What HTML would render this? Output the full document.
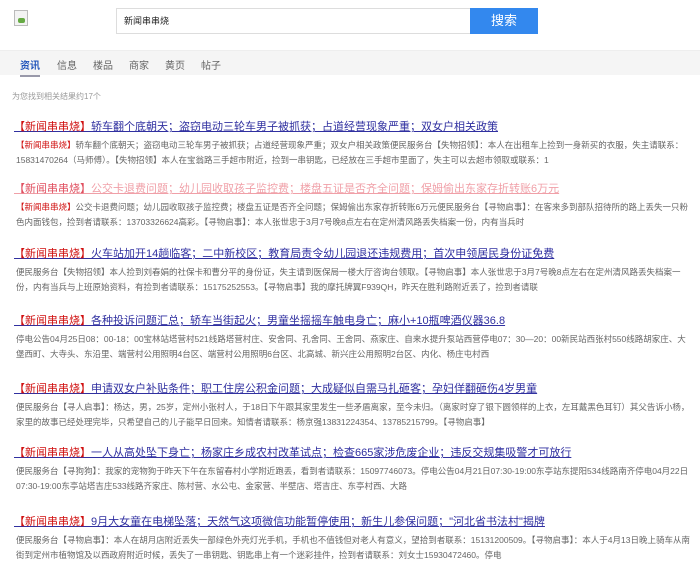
<!DOCTYPE html>
<html><head><meta charset="utf-8"><style>
*{margin:0;padding:0;box-sizing:border-box}
body{width:700px;height:560px;overflow:hidden;background:#fff;font-family:"Liberation Sans","Noto Sans CJK SC",sans-serif;position:relative}
.logo{position:absolute;left:14px;top:10px;width:14px;height:16px;border:1px solid #bbb;background:#f3f3f3}
.logo:after{content:"";position:absolute;left:3px;top:7px;width:7px;height:5px;background:#6a4;border-radius:2px}
.inp{position:absolute;left:116px;top:8px;width:354px;height:26px;border:1px solid #ddd;font-size:9px;line-height:24px;padding-left:7px;color:#222;border-right:none}
.btn{position:absolute;left:470px;top:8px;width:68px;height:26px;background:#3388ee;color:#fff;font-size:13px;text-align:center;line-height:26px}
.nav{position:absolute;left:0;top:50px;width:700px;height:25px;background:#f5f5f5;border-top:1px solid #eee}
.nav span{position:absolute;top:6px;font-size:10px;color:#666}
.nav .on{color:#2255bb;font-weight:bold}
.nav .ul{position:absolute;left:20px;top:24px;width:20px;height:2px;background:#99a}
.cnt{position:absolute;left:12px;top:91px;font-size:8px;color:#999}
.r{position:absolute;left:14px;width:680px}
.t{font-size:11px;color:#3030a0;text-decoration:underline;white-space:nowrap;line-height:14px}
.t b{color:#d01010;font-weight:normal}
.p{color:#f0a0a8}.p b{color:#e05060}
.d{font-size:8.5px;color:#666;line-height:14.5px;margin-top:4px;margin-left:2px}
.d b{color:#d01010;font-weight:normal}
</style></head><body>
<div class="logo"></div>
<div class="inp">新闻串串烧</div>
<div class="btn">搜索</div>
<div class="nav"><span class="on" style="left:20px">资讯</span><span style="left:57px">信息</span><span style="left:93px">楼品</span><span style="left:129px">商家</span><span style="left:165px">黄页</span><span style="left:201px">帖子</span><div class="ul"></div></div>
<div class="cnt">为您找到相关结果约17个</div>

<div class="r" style="top:120px"><div class="t"><b>【新闻串串烧】</b>轿车翻个底朝天；盗窃电动三轮车男子被抓获；占道经营现象严重；双女户相关政策</div>
<div class="d"><b>【新闻串串烧】</b>轿车翻个底朝天；盗窃电动三轮车男子被抓获；占道经营现象严重；双女户相关政策便民服务台【失物招领】：本人在出租车上捡到一身新买的衣服，失主请联系：15831470264（马师傅）。【失物招领】本人在宝翁路三手超市附近，捡到一串钥匙，已经放在三手超市里面了，失主可以去超市领取或联系：1</div></div>

<div class="r" style="top:182px"><div class="t p"><b>【新闻串串烧】</b>公交卡退费问题；幼儿园收取孩子监控费；楼盘五证是否齐全问题；保姆偷出东家存折转账6万元</div>
<div class="d"><b>【新闻串串烧】</b>公交卡退费问题；幼儿园收取孩子监控费；楼盘五证是否齐全问题；保姆偷出东家存折转账6万元便民服务台【寻物启事】：在客来多到部队招待所的路上丢失一只粉色内面钱包，捡到者请联系：13703326624高彩。【寻物启事】：本人张世忠于3月7号晚8点左右在定州清风路丢失档案一份，内有当兵时</div></div>

<div class="r" style="top:247px"><div class="t"><b>【新闻串串烧】</b>火车站加开14趟临客；二中新校区；教育局责令幼儿园退还违规费用；首次申领居民身份证免费</div>
<div class="d">便民服务台【失物招领】本人捡到刘春娟的社保卡和曹分平的身份证，失主请到医保局一楼大厅咨询台领取。【寻物启事】本人张世忠于3月7号晚8点左右在定州清风路丢失档案一份，内有当兵与上班原始资料，有捡到者请联系：15175252553。【寻物启事】我的摩托牌翼F939QH，昨天在胜利路附近丢了，捡到者请联</div></div>

<div class="r" style="top:314px"><div class="t"><b>【新闻串串烧】</b>各种投诉问题汇总；轿车当街起火；男童坐摇摇车触电身亡；麻小+10瓶啤酒仪器36.8</div>
<div class="d">停电公告04月25日08：00-18：00宝林站塔营村521线路塔营村庄、安舍同、孔舍同、王舍同、燕家庄、自来水提升泵站西营停电07：30—20：00新民站西张村550线路胡家庄、大堡西町、大寺头、东沿里、端营村公用照明4台区、端营村公用照明6台区、北高城、新兴庄公用照明2台区、内化、杨庄屯村西</div></div>

<div class="r" style="top:382px"><div class="t"><b>【新闻串串烧】</b>申请双女户补贴条件；职工住房公积金问题；大成疑似自需马扎砸客；孕妇佯翻砸伤4岁男童</div>
<div class="d">便民服务台【寻人启事】：杨达，男，25岁，定州小张村人，于18日下午跟其家里发生一些矛盾离家，至今未归。（离家时穿了银下圆领样的上衣，左耳戴黑色耳钉）其父告诉小杨，家里的故事已经处理完毕，只希望自己的儿子能早日回来。知情者请联系：杨京强13831224354、13785215799。【寻物启事】</div></div>

<div class="r" style="top:446px"><div class="t"><b>【新闻串串烧】</b>一人从高处坠下身亡；杨家庄乡成农村改革试点；检查665家涉危废企业；违反交规集吸警才可放行</div>
<div class="d">便民服务台【寻狗狗】：我家的宠物狗于昨天下午在东留春村小学附近跑丢，看到者请联系：15097746073。停电公告04月21日07:30-19:00东亭站东提阳534线路南齐停电04月22日07:30-19:00东亭站塔吉庄533线路齐家庄、陈村营、水公屯、金家营、半壁店、塔吉庄、东亭村西、大路</div></div>

<div class="r" style="top:515px"><div class="t"><b>【新闻串串烧】</b>9月大女童在电梯坠落；天然气这项微信功能暂停使用；新生儿参保问题；"河北省书法村"揭牌</div>
<div class="d">便民服务台【寻物启事】：本人在胡月店附近丢失一部绿色外壳灯光手机，手机也不值钱但对老人有意义，望拾到者联系：15131200509。【寻物启事】：本人于4月13日晚上骑车从南街到定州市植物馆及以西政府附近时候，丢失了一串钥匙、钥匙串上有一个迷彩挂件，捡到者请联系：刘女士15930472460。停电</div></div>
</body></html>
